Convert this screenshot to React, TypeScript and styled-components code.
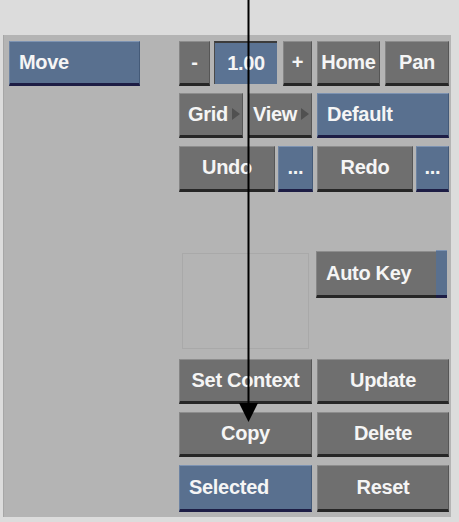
import React, { FC } from "react";
import styled, { createGlobalStyle, css } from "styled-components";

const GlobalStyle = createGlobalStyle`
  body {
    margin: 0;
    background: #dcdcdc;
    font-family: "Liberation Sans", Arial, sans-serif;
  }
`;

const Page = styled.div`
  position: relative;
  width: 459px;
  height: 522px;
  padding: 35px 0 0 3px;
  box-sizing: border-box;
  overflow: hidden;
`;

const Panel = styled.div`
  display: flex;
  width: 448px;
  height: 482px;
  box-sizing: border-box;
  padding: 6px 0 0 5px;
  background: #b4b4b4;
  border-left: 1px solid #a6a6a6;
`;

const LeftColumn = styled.div`
  width: 131px;
`;

const RightColumn = styled.div`
  display: flex;
  flex-direction: column;
  width: 270px;
  margin-left: 39px;
`;

const Row = styled.div<{ $gap?: number; $top?: number }>`
  display: flex;
  align-items: flex-start;
  gap: ${({ $gap }) => $gap ?? 5}px;
  margin-top: ${({ $top }) => $top ?? 0}px;
`;

const HalfGrid = styled.div<{ $top?: number }>`
  display: grid;
  grid-template-columns: 133px 132px;
  column-gap: 5px;
  row-gap: 8px;
  margin-top: ${({ $top }) => $top ?? 0}px;
`;

type Tone = "gray" | "blue";

const label = css`
  font-size: 20px;
  font-weight: bold;
  letter-spacing: -0.3px;
  color: #f5f5f5;
  white-space: nowrap;
`;

const Button = styled.div<{
  $tone?: Tone;
  $w?: number;
  $left?: boolean;
  $h?: number;
}>`
  ${label};
  position: relative;
  box-sizing: border-box;
  width: ${({ $w }) => ($w ? `${$w}px` : "auto")};
  height: ${({ $h }) => $h ?? 45}px;
  display: flex;
  align-items: center;
  justify-content: ${({ $left }) => ($left ? "flex-start" : "center")};
  padding: ${({ $left }) => ($left ? "0 0 1px 9px" : "0 0 1px 0")};
  border-top: 1px solid #8d8d8d;
  border-left: 1px solid #858585;
  border-right: 1px solid #565656;
  border-bottom: 3px solid #262626;
  background: #6f6f6f;
  ${({ $tone }) =>
    $tone === "blue" &&
    css`
      background: #59708f;
      border-top-color: #7d93b2;
      border-left-color: #6d83a2;
      border-right-color: #445a78;
      border-bottom-color: #1d1d45;
    `}
`;

const Field = styled.div`
  ${label};
  box-sizing: border-box;
  width: 63px;
  height: 43px;
  display: flex;
  align-items: center;
  justify-content: center;
  background: #5b7393;
  border-top: 2px solid #3c3c3c;
  border-left: 1px solid #4a4a4a;
`;

const Menu = styled(Button)<{ $pad: number }>`
  justify-content: flex-start;
  padding-left: ${({ $pad }) => $pad}px;
  &::after {
    content: "";
    position: absolute;
    right: 2px;
    top: 14px;
    border-top: 6px solid transparent;
    border-bottom: 6px solid transparent;
    border-left: 8px solid #505050;
  }
`;

const Blank = styled.div`
  box-sizing: border-box;
  width: 127px;
  height: 96px;
  margin: 2px 0 0 3px;
  border: 1px solid #a9a9a9;
`;

const KeyButton = styled(Button)`
  padding-right: 12px;
  &::after {
    content: "";
    position: absolute;
    right: -1px;
    top: -2px;
    bottom: -3px;
    width: 11px;
    background: #59708f;
    border-top: 1px solid #7d93b2;
    border-bottom: 3px solid #1d1d45;
  }
`;

const Pointer = styled.svg`
  position: absolute;
  left: 238px;
  top: 0;
`;

const App: FC = () => {
  return (
    <>
      <GlobalStyle />
      <Page>
        <Panel>
          <LeftColumn>
            <Button $tone="blue" $left $w={131}>
              Move
            </Button>
          </LeftColumn>
          <RightColumn>
            <Row $gap={0}>
              <Button $w={31}>-</Button>
              <Field style={{ marginLeft: 4 }}>1.00</Field>
              <Button $w={29} style={{ marginLeft: 6 }}>
                +
              </Button>
              <Button $w={63} style={{ marginLeft: 5 }}>
                Home
              </Button>
              <Button $w={64} style={{ marginLeft: 5 }}>
                Pan
              </Button>
            </Row>
            <Row $top={7}>
              <Menu $w={64} $pad={8}>
                Grid
              </Menu>
              <Menu $w={64} $pad={4}>
                View
              </Menu>
              <Button $tone="blue" $left $w={132}>
                Default
              </Button>
            </Row>
            <Row $top={8} $gap={0}>
              <Button $w={96} $h={46}>
                Undo
              </Button>
              <Button $tone="blue" $w={35} $h={46} style={{ marginLeft: 3 }}>
                ...
              </Button>
              <Button $w={96} $h={46} style={{ marginLeft: 4 }}>
                Redo
              </Button>
              <Button $tone="blue" $w={33} $h={46} style={{ marginLeft: 3 }}>
                ...
              </Button>
            </Row>
            <Row $top={59} $gap={7}>
              <Blank />
              <KeyButton $left $w={131} $h={47}>
                Auto Key
              </KeyButton>
            </Row>
            <HalfGrid $top={10}>
              <Button>Set Context</Button>
              <Button>Update</Button>
              <Button>Copy</Button>
              <Button>Delete</Button>
              <Button $tone="blue" $left $h={47}>
                Selected
              </Button>
              <Button $h={47}>Reset</Button>
            </HalfGrid>
          </RightColumn>
        </Panel>
        <Pointer width="22" height="424" viewBox="0 0 22 424">
          <line x1="10.5" y1="0" x2="10.5" y2="406" stroke="#000" strokeWidth="2" />
          <polygon points="1,403 20,403 10.5,422" fill="#000" />
        </Pointer>
      </Page>
    </>
  );
};

export default App;
